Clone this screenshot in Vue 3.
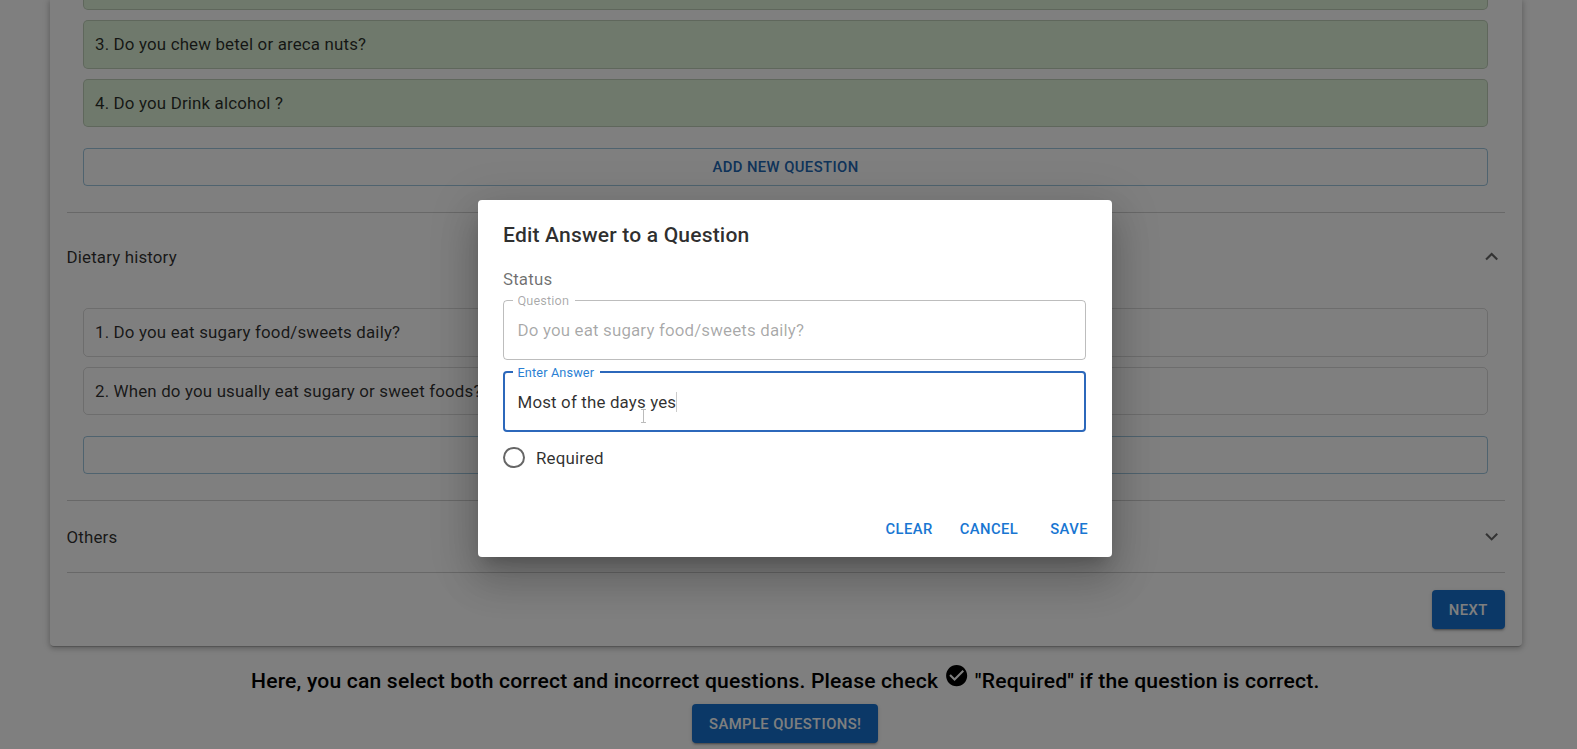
<script setup>
import { ref } from 'vue'

const habits = ['3. Do you chew betel or areca nuts?', '4. Do you Drink alcohol ?']
const dietary = [
  '1. Do you eat sugary food/sweets daily?',
  '2. When do you usually eat sugary or sweet foods?',
]
const actions = ['CLEAR', 'CANCEL', 'SAVE']
const question = ref('Do you eat sugary food/sweets daily?')
const answer = ref('Most of the days yes')
</script>

<template>
  <div class="page">
    <main class="card">
      <div class="list habits">
        <div class="item done clipped"></div>
        <div v-for="q in habits" :key="q" class="item done">{{ q }}</div>
        <button class="add">ADD NEW QUESTION</button>
      </div>

      <section class="section first">
        <header class="section-head">
          <span>Dietary history</span>
          <svg class="chevron" viewBox="0 0 24 24"><path d="M12 8l-6 6 1.41 1.41L12 10.83l4.59 4.58L18 14z" /></svg>
        </header>
        <div class="list dietary">
          <div v-for="q in dietary" :key="q" class="item">{{ q }}</div>
          <button class="add">ADD NEW QUESTION</button>
        </div>
      </section>

      <section class="section others">
        <header class="section-head">
          <span>Others</span>
          <svg class="chevron" viewBox="0 0 24 24"><path d="M16.59 8.59L12 13.17 7.41 8.59 6 10l6 6 6-6z" /></svg>
        </header>
      </section>

      <div class="card-foot"><button class="solid next">NEXT</button></div>
    </main>

    <footer class="foot">
      <div class="hint">
        <span>Here, you can select both correct and incorrect questions. Please check</span>
        <svg class="check" viewBox="0 0 24 24"><path d="M12 2C6.48 2 2 6.48 2 12s4.48 10 10 10 10-4.48 10-10S17.52 2 12 2zm-2 15l-5-5 1.41-1.41L10 14.17l7.59-7.59L19 8l-9 9z" /></svg>
        <span>"Required" if the question is correct.</span>
      </div>
      <button class="solid sample">SAMPLE QUESTIONS!</button>
    </footer>

    <div class="backdrop">
      <div class="dialog">
        <h2>Edit Answer to a Question</h2>
        <p class="status">Status</p>
        <fieldset class="field disabled">
          <legend>Question</legend>
          <div class="value">{{ question }}</div>
        </fieldset>
        <fieldset class="field focused">
          <legend>Enter Answer</legend>
          <div class="value">{{ answer }}<i class="caret"></i></div>
        </fieldset>
        <div class="radio"><i class="ring"></i><span>Required</span></div>
        <div class="actions">
          <button v-for="a in actions" :key="a">{{ a }}</button>
        </div>
        <svg class="pointer" viewBox="0 0 7 14"><path d="M1 .5h5M3.500 .5v13M1 13.500h5" /></svg>
      </div>
    </div>
  </div>
</template>

<style>
html, body { margin: 0; height: 100%; overflow: hidden; background: #fff; }
</style>

<style scoped>
* { box-sizing: border-box; }
.page {
  position: relative; width: 1577px; height: 749px; overflow: hidden;
  font-family: Roboto, "Liberation Sans", sans-serif; font-size: 16.9px; letter-spacing: 0.16px;
  color: rgba(0, 0, 0, 0.82);
}
button { font-family: inherit; font-weight: 500; font-size: 14.8px; letter-spacing: 0.42px; padding: 0; border: 0; background: none; color: #1976d2; }
.card {
  margin-left: 49.5px; width: 1472px; height: 646px; padding: 0 17px; background: #fff;
  border-radius: 0 0 4px 4px;
  box-shadow: 0 2px 1px -1px rgba(0,0,0,.2), 0 2px 4px 1px rgba(0,0,0,.14), 0 1px 9px 2px rgba(0,0,0,.1);
}
.list { display: flex; flex-direction: column; padding: 0 16.5px; }
.habits { height: 212px; }
.item {
  height: 48.5px; margin-bottom: 10.2px; padding: 0 11px; display: flex; align-items: center;
  border: 1px solid rgba(0, 0, 0, 0.14); border-radius: 5px; flex: none; white-space: nowrap;
}
.item.done { background: #def2d8; }
.item.clipped { height: 10px; border-top: 0; border-radius: 0 0 5px 5px; }
.add { height: 38.5px; margin-top: 10.3px; border: 1px solid rgba(25, 118, 178, 0.42); border-radius: 4px; flex: none; color: #2268b4; }
.section { border-top: 1px solid rgba(0, 0, 0, 0.18); }
.first { height: 288px; }
.section-head { display: flex; align-items: center; justify-content: space-between; height: 87px; }
.dietary { padding-top: 8px; }
.others { height: 73px; border-bottom: 1px solid rgba(0, 0, 0, 0.18); }
.others .section-head { height: 71px; }
.chevron { width: 25.3px; height: 25.3px; fill: rgba(0, 0, 0, 0.6); }
.solid {
  height: 39px; color: #fff; background: #1671ce; border-radius: 4px;
  box-shadow: 0 3px 1px -2px rgba(0,0,0,.2), 0 2px 2px rgba(0,0,0,.14), 0 1px 5px rgba(0,0,0,.12);
}
.card-foot { display: flex; justify-content: flex-end; padding-top: 17px; }
.next { width: 72.5px; }
.foot { margin-left: 49.5px; width: 1471.5px; display: flex; flex-direction: column; align-items: center; }
.hint { display: flex; align-items: center; gap: 5.7px; height: 58px; padding-top: 10px; font-size: 21.12px; font-weight: 500; color: #000; letter-spacing: 0.178px; white-space: nowrap; }
.hint .check { width: 25.3px; height: 25.3px; margin-bottom: 9px; }
.sample { width: 186px; }
.backdrop { position: absolute; inset: 0; background: rgba(0, 0, 0, 0.5); }
.dialog {
  position: relative; margin: 200px 0 0 477.5px; width: 634px; height: 357px; padding: 0 25.5px;
  background: #fff; border-radius: 4px; display: flex; flex-direction: column;
  box-shadow: 0 11px 15px -7px rgba(0,0,0,.2), 0 24px 38px 3px rgba(0,0,0,.14), 0 9px 46px 8px rgba(0,0,0,.12);
}
h2 { margin: 18px 0 0; font-size: 21.1px; line-height: 34px; font-weight: 500; letter-spacing: 0.16px; }
.status { margin: 14px 0 0; height: 27px; line-height: 26px; color: rgba(0, 0, 0, 0.57); }
.field { margin: 0; padding: 0 13.5px; min-width: 0; border-radius: 4px; flex: none; }
.field legend { padding: 0 5.5px 0 5px; margin-left: -5px; font-size: 12.7px; line-height: 15px; height: 15px; letter-spacing: 0.14px; }
.value { display: flex; align-items: center; letter-spacing: 0.16px; }
.disabled { height: 66.5px; border: 1px solid rgba(0, 0, 0, 0.26); color: rgba(0, 0, 0, 0.35); }
.disabled .value { height: 43px; }
.focused { height: 67px; margin-top: 5px; border: 2px solid #2c68bb; padding: 0 12.5px; }
.focused legend { color: #2a7fd3; }
.focused .value { height: 45px; }
.caret { width: 1px; height: 20px; background: #ccc; }
.radio { display: flex; align-items: center; gap: 11.5px; height: 42px; margin-top: 5px; }
.ring { width: 21.5px; height: 21.5px; border: 2px solid rgba(0, 0, 0, 0.6); border-radius: 50%; }
.actions { display: flex; justify-content: flex-end; gap: 27px; margin-top: 38px; margin-right: -2px; }
.actions button { height: 24px; }
.actions button:last-child { margin-left: 5px; }
.pointer { position: absolute; left: 162.5px; top: 209px; width: 7px; height: 14px; fill: none; stroke: #bbb; }
</style>
